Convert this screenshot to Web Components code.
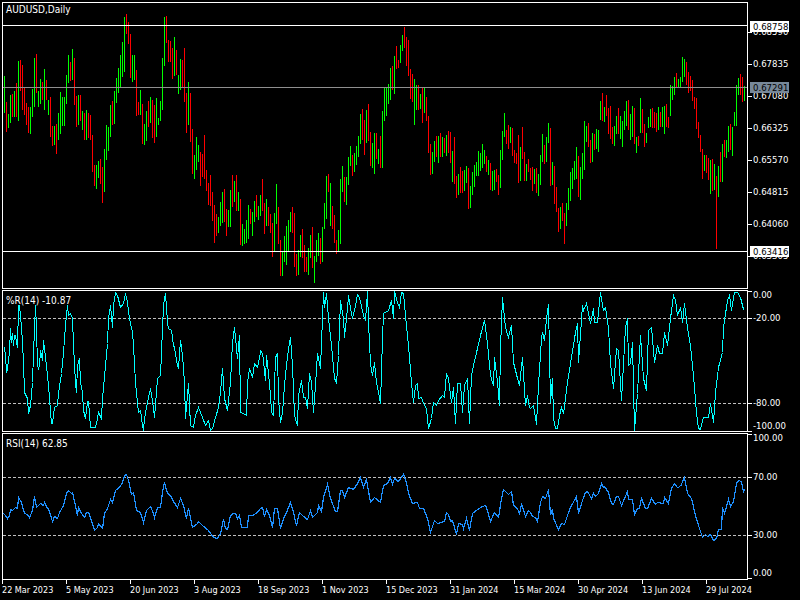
<!DOCTYPE html>
<html><head><meta charset="utf-8"><title>AUDUSD,Daily</title>
<style>html,body{margin:0;padding:0;background:#000}</style></head>
<body>
<mt-chart>
  <mt-pane id="main" top="2" h="287" legend="1">AUDUSD,Daily</mt-pane>
  <mt-pane id="wpr" top="290" h="142" legend="4">%R(14) -10.87</mt-pane>
  <mt-pane id="rsi" top="433" h="147" legend="4">RSI(14) 62.85</mt-pane>
  <mt-time></mt-time>
</mt-chart>
<script>
const BARS=("g76,113 r102,132 g114,128 g95,123 r94,117 g91,117 r83,117 g61,121 r60,91 r65,110 r88,115 r103,125 r107,133 g107,134 g89,117 g58,107 r54,93 g91,107 g79,104 r82,100 g69,110 r80,100 g100,115 r97,137 r126,146 g126,145 r124,154 g113,140 g92,134 g97,126 g97,126 g75,104 g55,83 r62,81 g49,80 r58,105 r96,127 g95,125 r95,121 g111,130 r113,140 g110,140 r113,138 r115,140 r135,172 r165,186 g165,189 g161,178 r159,184 r167,203 g149,192 g125,160 g127,151 g105,137 r101,125 g91,124 g78,103 g68,93 g55,88 g42,77 g17,72 r14,34 r22,44 r34,78 g55,82 g55,80 r70,116 r102,115 g90,115 r104,144 g124,145 g111,141 r101,127 g97,123 r100,138 r105,143 g98,137 g118,125 g101,121 g58,110 g17,66 r16,43 r40,62 r41,62 r48,79 g37,76 r50,75 g75,94 g59,90 r60,88 r48,102 r93,133 g82,125 r93,142 r129,174 g155,179 g137,170 g145,162 r152,186 r154,177 r135,179 r170,191 r183,205 r175,206 r192,221 r205,243 r214,236 g217,233 g202,226 g192,223 r189,222 r209,236 g210,227 g190,227 r175,207 g181,202 r175,211 g192,211 r199,245 g224,246 g229,244 g220,243 g205,239 r209,224 g212,236 g201,222 r195,217 g206,220 g195,216 r179,211 r203,234 g199,226 r207,226 "+
"r214,233 r223,257 g213,251 g184,224 r207,244 r240,276 g252,276 g236,262 g226,265 g220,251 g212,232 r207,233 r213,267 r254,276 g250,275 g235,257 r229,258 r245,272 r257,272 g248,275 g235,258 r227,268 g256,283 g240,262 g233,256 r238,264 g227,262 g203,229 g176,219 r174,192 g183,226 r206,229 r215,243 r240,254 g230,251 g179,244 g166,192 r177,202 g177,205 g157,185 g146,166 r155,176 g153,172 g146,165 g136,157 g114,144 r109,140 r120,155 g110,143 r104,141 r132,166 g143,168 g133,174 r133,159 g149,164 r136,168 g111,168 g87,121 g87,116 g84,104 g68,100 r66,90 g56,94 r46,69 r60,68 g45,63 g35,51 r27,48 r37,66 r40,76 r69,99 r74,102 g79,125 g85,110 r85,110 g94,109 r88,123 g87,113 r97,121 r116,153 r144,175 g152,174 g141,162 r136,157 g136,163 r133,157 g137,157 r138,153 g135,156 r131,153 r132,163 g151,182 r137,184 r176,198 g174,195 r167,193 r171,193 g170,191 g166,183 r168,209 g186,208 g172,195 g165,187 g162,176 g151,176 g153,171 g144,168 g150,164 r156,172 g160,175 r163,190 g171,191 g170,190 r169,182 r175,195 g150,188 g131,160 g113,137 r130,144 r125,149 g127,143 r128,156 r150,163 r153,164 r135,183 g147,181 r127,159 r152,181 g164,181 r159,172 "+
"r168,180 r167,191 g169,184 r168,193 g174,196 g155,185 g134,162 r145,164 g137,162 g123,143 r128,186 g162,185 r166,204 r187,212 r208,232 g207,229 r203,221 r213,244 g203,226 g188,210 g172,201 g168,189 g161,180 g147,179 r156,197 g167,200 g153,179 g121,170 g126,142 r123,147 r140,163 g133,162 r134,150 g129,149 g130,152 g101,120 r93,121 g107,122 r95,116 r108,134 r106,139 r127,144 g126,146 g116,134 r108,134 g116,139 g121,147 g111,130 g101,126 r100,130 g114,140 g106,137 r108,144 g137,153 r136,146 g98,133 r109,133 r124,147 g133,143 g117,128 g109,127 r108,128 r112,128 r113,132 g107,130 r112,127 g107,127 g106,134 r104,127 r117,128 g85,116 g86,100 g77,95 r73,88 g79,87 g77,87 g57,82 g59,77 r62,85 r72,93 r76,91 r80,101 r97,109 r98,129 r122,138 r135,152 r149,179 g155,171 r155,173 r158,180 g160,194 r159,191 g164,190 r176,249 g166,197 r152,182 g144,182 r140,157 g140,158 g126,152 r124,150 g127,156 g112,126 g85,126 g78,95 r74,95 r77,102 g86,101").trim().split(/\s+/);

const WPR=[[0,285,"10,190 13,187 16,210 19,262 22,250 27,200 30,130 33,170 36,145 39,180 42,150 45,150 50,185 55,60 58,60 62,125 65,170 70,230 73,320 80,340 85,385 90,360 95,290 100,205 104,60 107,130 110,240 113,250 118,240 121,195 125,225 130,165 135,215 140,270 145,300 150,378 153,415 157,415 163,365 170,360 175,325 182,265 190,200 195,120 200,60 204,90 210,85 215,100 220,180 226,295 229,320 232,240 236,220 240,290 245,320 250,375 255,400 260,347 265,347 270,425 278,425 285,425 290,400 295,380 302,400 307,340 315,240 320,175 325,100 330,60 335,125 340,60 344,22 350,30 360,65 368,55 375,25 382,50 388,100 395,140 400,180 405,290 410,355 415,380 420,375 425,420 428,435 433,400 440,350 450,310 455,345 460,370 463,395 470,280 480,270 484,200 488,60 494,25 500,110 505,130 512,135 518,180 522,185 530,240 535,250 541,165 546,210 552,290 556,400 560,330 565,295 570,420 578,425 585,390 595,365 605,395 615,420 623,405 630,435 637,430 645,395 655,365 660,320 667,250 672,340 680,375 690,290 695,170 702,125 708,190 712,220 716,150 720,380 728,385 737,390 742,290 746,250 755,275 762,235 770,245 780,200"],
[260,285,"0,195 5,205 10,225 14,285 18,210 24,265 30,330 34,380 38,390 44,215 50,205 54,340 60,410 65,380 72,300 78,240 85,190 91,155 97,240 103,390 110,420 115,330 122,285 128,335 135,335 140,370 148,265 152,290 158,380 165,300 172,205 180,250 185,95 188,22 192,65 198,25 205,100 212,180 222,280 228,290 235,210 240,45 248,100 253,155 260,70 265,30 270,70 277,100 285,60 292,28 298,35 308,90 315,105 320,18 325,110 330,235 335,270 342,230 348,290 355,320 361,355 365,160 370,85 385,75 392,45 398,100 403,18 410,50 418,65 422,22 428,25 435,90 445,180 452,290 458,350 465,300 470,295 475,340 482,335 488,355 497,370 505,428 512,400 520,350 528,360 535,345 545,330 552,335 558,265 565,280 572,350 578,305 585,415 592,295 600,295 606,380 612,300 620,280 626,415 632,270 640,240 650,190 660,150 672,105 680,175 690,270 698,300 703,215 710,290 716,360 720,190 727,35 735,125 745,155 752,120 758,230 770,280 778,300 785,215 795,360 800,330 806,365"],
[530,285,"0,370 10,360 18,418 25,300 32,160 37,140 43,165 47,100 55,58 60,350 65,280 70,400 75,428 80,428 88,390 92,365 98,385 110,290 120,235 135,140 140,115 145,232 155,60 160,75 168,55 180,115 188,70 193,110 200,110 210,20 218,75 224,65 235,130 240,235 248,310 258,190 265,195 272,345 285,125 290,100 295,240 300,235 306,170 313,435 320,325 330,150 340,280 348,315 355,135 362,125 372,230 380,180 388,205 396,205 403,140 412,180 420,100 428,30 435,45 440,90 450,65 455,110 462,55 470,125 480,180 490,270 497,380 503,430 510,433 520,395 533,395 540,355 548,410 555,320 565,245 575,200 580,125 590,45 597,30 603,75 613,20 622,22 630,35 638,72 640,65"]];

const RSI=[[0,430,"10,250 15,255 20,265 27,255 30,237 35,240 45,230 50,235 55,200 62,215 72,248 80,252 86,262 95,240 102,197 108,230 115,225 120,220 128,225 132,215 140,235 145,235 155,272 162,258 170,265 178,245 190,225 198,190 205,180 212,190 217,187 225,225 230,255 235,230 243,248 253,262 258,245 265,245 272,270 283,300 290,290 295,280 305,293 312,250 320,235 330,208 337,215 345,180 358,172 365,155 372,135 378,133 385,150 392,192 398,187 408,240 420,245 428,275 438,240 450,228 458,250 463,260 470,230 480,232 487,185 493,157 500,190 510,195 520,212 530,230 540,205 548,225 558,265 565,235 577,290 590,278 595,273 605,285 625,300 638,320 650,325 660,310 668,268 675,295 680,298 690,255 700,250 705,248 712,265 718,255 722,290 740,292 745,255 755,255 770,245"],
[260,430,"0,233 5,232 12,258 18,238 28,255 37,292 43,235 50,235 60,295 70,265 78,245 90,217 98,245 108,285 118,245 130,258 140,268 150,240 157,262 170,247 175,225 182,242 190,200 200,162 210,205 225,243 232,242 240,180 247,180 252,202 265,170 280,178 292,158 300,142 310,170 318,148 330,217 342,200 360,217 368,165 380,160 390,140 397,162 403,143 415,152 428,133 438,155 445,190 455,220 470,217 477,235 490,235 500,265 510,305 522,270 532,280 553,272 558,247 565,253 570,272 577,270 588,313 595,280 605,282 608,293 618,265 626,300 637,250 650,238 665,228 675,225 682,240 690,272 703,245 715,262 722,205 730,178 745,192 752,183 760,225 770,235 777,253 782,220 795,258 803,240"],
[530,430,"0,245 5,258 15,260 20,272 30,215 37,198 45,205 53,178 60,252 65,238 70,265 85,298 92,278 103,283 113,245 120,232 138,198 145,248 155,210 165,185 170,182 182,205 188,190 195,198 205,190 212,160 218,170 223,167 235,187 243,218 248,222 258,198 265,198 272,225 290,182 295,208 305,208 313,253 320,235 327,235 332,205 345,233 350,233 362,203 375,222 382,215 398,220 403,202 415,220 423,175 433,160 440,170 450,168 463,142 472,190 482,205 495,255 505,285 517,322 525,313 532,318 540,313 548,330 557,325 565,298 572,298 577,232 582,248 595,208 600,228 608,213 618,160 625,150 632,152 638,185 641,178"]];

function linePts(segs){
  const out=[];
  for(const [ox,oy,s] of segs) for(const p of s.split(' ')){
    const [a,b]=p.split(',').map(Number);
    out.push((Math.round(ox+a/3)+.5)+','+(Math.round(oy+b/3)+.5));
  }
  return out.join(' ');
}
function barPath(c){
  let d='';
  BARS.forEach((b,i)=>{ if(b[0]!==c)return; const [t,v]=b.slice(1).split(','); d+=`M${4+2*i+.5} ${t}V${v}`; });
  return d;
}
function hline(y,col,dash){return `<line x1="3" x2="747" y1="${y+.5}" y2="${y+.5}" stroke="${col}"${dash?' stroke-dasharray="3 2"':''}/>`;}

const PANES={
  main:{
    art:()=>`<path d="${barPath('g')}" stroke="#00ff00" fill="none"/><path d="${barPath('r')}" stroke="#ff0000" fill="none"/>`+hline(25,'#fff')+hline(87,'#8f8f8f')+hline(251,'#fff'),
    ticks:[[32,'0.68590'],[64,'0.67835'],[96,'0.67080'],[128,'0.66325'],[160,'0.65570'],[192,'0.64815'],[224,'0.64060'],[256,'0.63305']],
    tags:[[21,11,'0.68758','#fff'],[82,11,'0.67291','#778899'],[246,11,'0.63416','#fff']]
  },
  wpr:{
    art:()=>hline(318,'#c0c0c0',1)+hline(403,'#c0c0c0',1)+`<polyline points="${linePts(WPR)}" stroke="#00ffff" fill="none"/>`,
    ticks:[[291,'0.00',295],[318,'-20.00'],[403,'-80.00'],[431,'-100.00',426]],tags:[]
  },
  rsi:{
    art:()=>hline(477,'#c0c0c0',1)+hline(535,'#c0c0c0',1)+`<polyline points="${linePts(RSI)}" stroke="#1e90ff" stroke-width="1.2" fill="none"/>`,
    ticks:[[434,'100.00',438],[477,'70.00'],[535,'30.00'],[578,'0.00',573]],tags:[]
  }
};
const FONT='"DejaVu Sans Condensed","DejaVu Sans",sans-serif';

class MtChart extends HTMLElement{
  constructor(){super();this.attachShadow({mode:'open'}).innerHTML=`<style>
    :host{display:flex;flex-direction:column;gap:1px;box-sizing:border-box;width:800px;height:600px;padding:2px 0 0 2px;background:#000;color:#fff;overflow:hidden;font:9px ${FONT};font-stretch:condensed}
  </style><slot></slot>`;}
}
class MtPane extends HTMLElement{
  connectedCallback(){
    const cfg=PANES[this.id],top=+this.getAttribute('top'),h=+this.getAttribute('h'),lg=this.getAttribute('legend');
    const ax=(y,cls,txt)=>`<div class="lab ${cls}" style="top:${y-top-6}px">${txt}</div>`;
    const ticks=cfg.ticks.map(([y,t,ly])=>`<i class="tick" style="top:${y-top}px"></i>`+ax(ly||y,'',t)).join('');
    const tags=cfg.tags.map(([y,hh,t,bg])=>`<div class="tag" style="top:${y-top}px;height:${hh}px;background:${bg}">${t}</div>`).join('');
    this.attachShadow({mode:'open'}).innerHTML=`<style>
      :host{display:flex;height:${h}px;flex:none}
      .plot{position:relative;box-sizing:border-box;width:746px;height:100%;border:1px solid #fff;flex:none}
      svg{display:block;width:744px;height:${h-2}px;shape-rendering:crispEdges}
      .legend{position:absolute;left:3px;top:${lg}px;font:10px/12px ${FONT};font-stretch:condensed;color:#fff;white-space:nowrap}
      .axis{position:relative;width:52px;flex:none;height:100%;font-size:9.5px}
      .tick{position:absolute;left:0;width:4px;height:1px;background:#fff}
      .lab{position:absolute;left:5px;height:12px;line-height:12px;white-space:nowrap;color:#fff}
      .tag{position:absolute;left:2px;width:39px;box-sizing:border-box;padding-left:3px;line-height:11px;color:#000;white-space:nowrap}
    </style>
    <div class="plot"><svg viewBox="3 ${top+1} 744 ${h-2}">${cfg.art()}</svg><div class="legend"><slot></slot></div></div>
    <div class="axis">${ticks}${tags}</div>`;
  }
}
class MtTime extends HTMLElement{
  connectedCallback(){
    const L=['22 Mar 2023','5 May 2023','20 Jun 2023','3 Aug 2023','18 Sep 2023','1 Nov 2023','15 Dec 2023','31 Jan 2024','15 Mar 2024','30 Apr 2024','13 Jun 2024','29 Jul 2024'];
    this.attachShadow({mode:'open'}).innerHTML=`<style>
      :host{display:grid;grid-template-columns:repeat(12,64px);height:19px;margin-top:-1px;flex:none}
      .c{border-left:1px solid transparent;white-space:nowrap;display:flex;flex-direction:column;width:64px;box-sizing:border-box}
      .c i{display:block;width:1px;height:4px;background:#fff;margin-left:-1px}
      .c span{line-height:12px;margin-left:-1px}
    </style>${L.map(t=>`<div class="c"><i></i><span>${t}</span></div>`).join('')}`;
  }
}
customElements.define('mt-chart',MtChart);
customElements.define('mt-pane',MtPane);
customElements.define('mt-time',MtTime);
</script>
</body></html>
